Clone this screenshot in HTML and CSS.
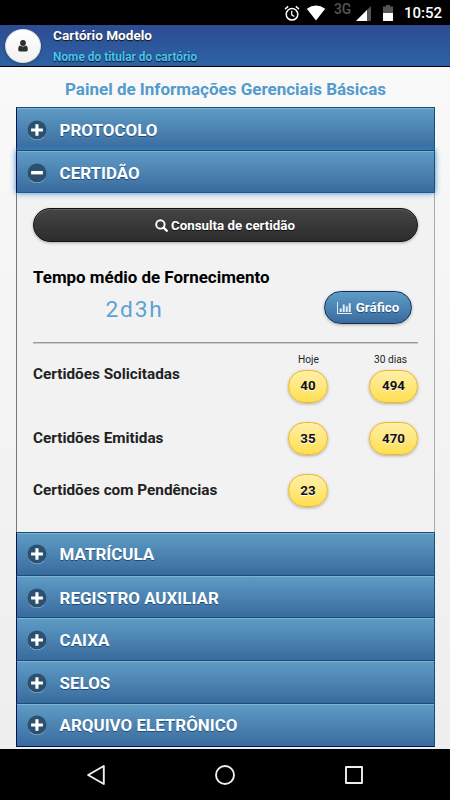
FILE: index.html
```html
<!DOCTYPE html>
<html lang="pt-BR">
<head>
    <meta charset="UTF-8">
    <meta name="viewport" content="width=device-width, initial-scale=1.0">
    <title>Cartório Modelo</title>
    <link rel="stylesheet" href="styles.css">
</head>
<body>

<svg class="symbols">
    <symbol id="plus" viewBox="0 0 20 20">
        <circle cx="10" cy="10.8" r="9.3" fill="#9cc3de"/>
        <circle cx="10" cy="10" r="9.5" fill="#2b5070"/>
        <path d="M8.4 4.2h3.1v4.3h4.4v3h-4.4v4.3H8.4v-4.3H4.1v-3h4.3z" fill="#fff"/>
    </symbol>
    <symbol id="minus" viewBox="0 0 20 20">
        <circle cx="10" cy="10.8" r="9.3" fill="#9cc3de"/>
        <circle cx="10" cy="10" r="9.5" fill="#2b5070"/>
        <path d="M4.1 8h11.8v3.4H4.1z" fill="#fff"/>
    </symbol>
</svg>

<div class="status-bar">
    <svg class="alarm" width="16" height="17" viewBox="0 0 16 17" fill="none" stroke="#fff">
        <circle cx="8" cy="9.3" r="5.8" stroke-width="1.5"/>
        <path d="M7.7 5.8v4l2.7 1.7" stroke-width="1.2"/>
        <path d="M1 4.1l3.2-2.7M15 4.1l-3.2-2.7" stroke-width="1.4"/>
    </svg>
    <svg class="wifi" width="20" height="16" viewBox="0 0 20 16">
        <path d="M10 15.5L.8 3.8Q10-2.6 19.2 3.8z" fill="#fff"/>
    </svg>
    <span class="network">3G</span>
    <svg class="signal" width="15" height="15" viewBox="0 0 15 15">
        <path d="M0 15L15 0v15z" fill="#555"/>
        <path d="M0 15L11 4v11z" fill="#fff"/>
    </svg>
    <svg class="battery" width="10" height="16" viewBox="0 0 10 16">
        <path d="M0 1.6h3V0h4v1.6h3V8H0z" fill="#555"/>
        <path d="M0 8h10v8H0z" fill="#fff"/>
    </svg>
    <span class="clock">10:52</span>
</div>

<header>
    <a href="#" class="user-btn">
        <svg width="10" height="12" viewBox="0 0 10 12" fill="#2e2e2e">
            <circle cx="5" cy="3" r="2.9"/>
            <path d="M2 5.5Q5 7.6 8 5.5Q9.8 6 9.8 9.5Q9.8 11.6 8.3 11.6H1.7Q.2 11.6.2 9.5Q.2 6 2 5.5z"/>
        </svg>
    </a>
    <div class="user-info">
        <div class="office">Cartório Modelo</div>
        <div class="holder">Nome do titular do cartório</div>
    </div>
</header>

<div class="main-content">
    <h3>Painel de Informações Gerenciais Básicas</h3>

    <div class="accordion">
        <div class="item"><svg><use href="#plus"/></svg><span>PROTOCOLO</span></div>
        <div class="item active"><svg><use href="#minus"/></svg><span>CERTIDÃO</span></div>
        <div class="panel">
            <a href="#" class="search-btn">
                <svg width="13" height="13" viewBox="0 0 13 13" fill="none" stroke="#fff">
                    <circle cx="5.4" cy="5.4" r="4.2" stroke-width="1.9"/>
                    <path d="M8.6 8.6l3.2 3.2" stroke-width="2.3" stroke-linecap="round"/>
                </svg>
                <span>Consulta de certidão</span>
            </a>
            <h4>Tempo médio de Fornecimento</h4>
            <div class="average">
                <span class="time">2d3h</span>
                <a href="#" class="chart-btn">
                    <svg width="15" height="12" viewBox="0 0 15 12" fill="#e4ecf5">
                        <path d="M0 0h1v11h14v1H0zM2.7 6.5h2V10h-2zM5.7 2.5h2V10h-2zM8.7 4.2h2V10h-2zM11.7 1.2h2V10h-2z"/>
                    </svg>
                    <span>Gráfico</span>
                </a>
            </div>
            <hr>
            <div class="row heads"><span></span><span>Hoje</span><span>30 dias</span></div>
            <div class="row solicited"><span class="label">Certidões Solicitadas</span><a href="#" class="count">40</a><a href="#" class="count wide">494</a></div>
            <div class="row"><span class="label">Certidões Emitidas</span><a href="#" class="count">35</a><a href="#" class="count wide">470</a></div>
            <div class="row"><span class="label">Certidões com Pendências</span><a href="#" class="count">23</a></div>
        </div>
        <div class="item after-panel"><svg><use href="#plus"/></svg><span>MATRÍCULA</span></div>
        <div class="item"><svg><use href="#plus"/></svg><span>REGISTRO AUXILIAR</span></div>
        <div class="item"><svg><use href="#plus"/></svg><span>CAIXA</span></div>
        <div class="item"><svg><use href="#plus"/></svg><span>SELOS</span></div>
        <div class="item last"><svg><use href="#plus"/></svg><span>ARQUIVO ELETRÔNICO</span></div>
    </div>
</div>

<div class="nav-bar">
    <svg width="20" height="22" viewBox="0 0 20 22"><path d="M17.8 2v18L2.1 11z"/></svg>
    <svg width="22" height="22" viewBox="0 0 22 22"><circle cx="11" cy="11" r="9"/></svg>
    <svg width="20" height="20" viewBox="0 0 20 20"><path d="M2 2h16v16H2z"/></svg>
</div>

</body>
</html>
```
FILE: styles.css
```css
* {
    box-sizing: border-box;
}

body {
    font-family: Roboto, sans-serif;
    background-color: #f3f3f3;
    color: #222;
    margin: 0;
    height: 800px;
    display: flex;
    flex-direction: column;
    overflow: hidden;
}

a {
    color: inherit;
    text-decoration: none;
}

.symbols {
    display: none;
}

.status-bar {
    height: 25px;
    background-color: #000;
    color: #fff;
    display: flex;
    align-items: flex-start;
    justify-content: flex-end;
    padding-right: 8px;
}

.alarm {
    margin: 5px 6px 0 0;
}

.wifi {
    margin: 5px 8px 0 0;
}

.network {
    width: 18px;
    margin: 1px 4px 0 0;
    color: #555;
    font-size: 13.8px;
    font-weight: 500;
    line-height: 16px;
}

.signal {
    margin: 6px 12px 0 0;
}

.battery {
    margin: 5px 11px 0 0;
}

.clock {
    width: 38px;
    font-size: 15px;
    font-weight: 500;
    line-height: 27px;
}

header {
    height: 42px;
    display: flex;
    align-items: flex-start;
    background: linear-gradient(#2e4b92, #2c63a5);
    border-bottom: 1px solid #000;
    padding-left: 5px;
}

.user-btn {
    width: 36px;
    height: 34px;
    margin-top: 4px;
    display: flex;
    align-items: center;
    justify-content: center;
    border: 1px solid #ddd;
    border-radius: 50%;
    background: linear-gradient(#fff, #f1f1f1);
    box-shadow: 0 1px 3px rgba(0, 0, 0, 0.3);
}

.user-info {
    margin-left: 12px;
    font-weight: bold;
    text-shadow: 0 1px 1px #111;
}

.office {
    font-size: 13.6px;
    line-height: 21px;
    color: #fff;
}

.holder {
    font-size: 11.9px;
    line-height: 22px;
    color: #45c5f2;
}

.main-content {
    height: 682px;
    padding: 0 15px 0 16px;
    background: linear-gradient(#f9f9f9, #eee);
}

h3 {
    margin: 0;
    height: 40px;
    line-height: 44px;
    font-size: 17px;
    font-weight: bold;
    text-align: center;
    color: #539bcd;
    white-space: nowrap;
}

.item {
    height: 42.7px;
    display: flex;
    align-items: center;
    padding: 2px 0 0 10px;
    border: 1px solid #145072;
    border-left-color: #02115a;
    border-bottom: 0;
    background: linear-gradient(#5f9cc5, #396b9e);
    box-shadow: inset 0 1px 0 #82b0d0;
    font-size: 16.95px;
    font-weight: bold;
    color: #fff;
    text-shadow: 0 1px 0 #194b7e;
}

.item svg {
    width: 20px;
    height: 20px;
    margin-right: 12.6px;
}

.item.active {
    position: relative;
    height: 43.6px;
    padding-top: 3px;
    border-bottom: 1px solid #145c91;
    box-shadow: inset 0 1px 0 #82b0d0, 0 0 6px #4189cc;
}

.item.after-panel {
    padding-top: 1px;
}

.item.last {
    height: 44px;
    padding-top: 1px;
    border-bottom: 1px solid #02115a;
}

.panel {
    height: 338.7px;
    padding: 15px 16px 0;
    border: 1px solid #aaa;
    border-left-color: #777;
    border-width: 0 1px;
    background-color: #f2f2f2;
}

.search-btn {
    height: 34px;
    display: flex;
    align-items: center;
    justify-content: center;
    gap: 3px;
    padding-right: 1px;
    border: 1px solid #111;
    border-radius: 17px;
    background: linear-gradient(#444, #2d2d2d);
    box-shadow: inset 0 1px 0 #5d605f, 0 1px 3px rgba(0, 0, 0, 0.3);
    color: #fff;
    font-size: 13.3px;
    font-weight: bold;
    text-shadow: 0 1px 0 #111;
}

h4 {
    margin: 24px 0 0;
    line-height: 23px;
    font-size: 16.95px;
    font-weight: bold;
    color: #000;
}

.average {
    height: 53px;
    display: flex;
    justify-content: space-between;
}

.time {
    width: 203px;
    padding-top: 7px;
    text-align: center;
    font-size: 22.7px;
    font-weight: 400;
    line-height: 28px;
    letter-spacing: 1.8px;
    color: #5ba3d4;
}

.chart-btn {
    width: 88px;
    height: 33px;
    margin: 2px 6px 0 0;
    display: flex;
    align-items: center;
    justify-content: center;
    gap: 4px;
    border: 1px solid #0e2d5d;
    border-radius: 17px;
    background: linear-gradient(#5f9cc5, #396b9e);
    box-shadow: 0 1px 3px rgba(0, 0, 0, 0.3);
    color: #fff;
    font-size: 13.3px;
    font-weight: bold;
    text-shadow: 0 1px 0 #194b7e;
}

hr {
    height: 2px;
    margin: 0;
    border: 0;
    border-top: 1px solid #999;
    border-bottom: 1px solid #ccc;
}

.row {
    display: grid;
    grid-template-columns: 255px 81px 49px;
    height: 52px;
}

.row.heads {
    height: 26px;
    line-height: 31px;
    font-size: 10.2px;
}

.heads span:nth-child(2) {
    padding-left: 10px;
}

.heads span:nth-child(3) {
    padding-left: 5px;
    white-space: nowrap;
}

.label {
    line-height: 32px;
    font-size: 15.3px;
    font-weight: bold;
}

.solicited .label {
    line-height: 8px;
}

.count {
    width: 40px;
    height: 33px;
    border: 1px solid #efb81c;
    border-radius: 17px;
    background: linear-gradient(#ffefaa, #ffdf50);
    box-shadow: 0 1px 3px rgba(0, 0, 0, 0.3);
    text-align: center;
    line-height: 31px;
    font-size: 13.3px;
    font-weight: bold;
    color: #111;
    text-shadow: 0 1px 0 #fff;
}

.solicited .count {
    line-height: 29px;
}

.count.wide {
    width: 49px;
}

.nav-bar {
    height: 51px;
    display: flex;
    align-items: center;
    justify-content: space-between;
    padding: 0 86px;
    background-color: #000;
}

.nav-bar svg {
    fill: none;
    stroke: #eee;
    stroke-width: 1.9;
    stroke-linejoin: round;
}
```
